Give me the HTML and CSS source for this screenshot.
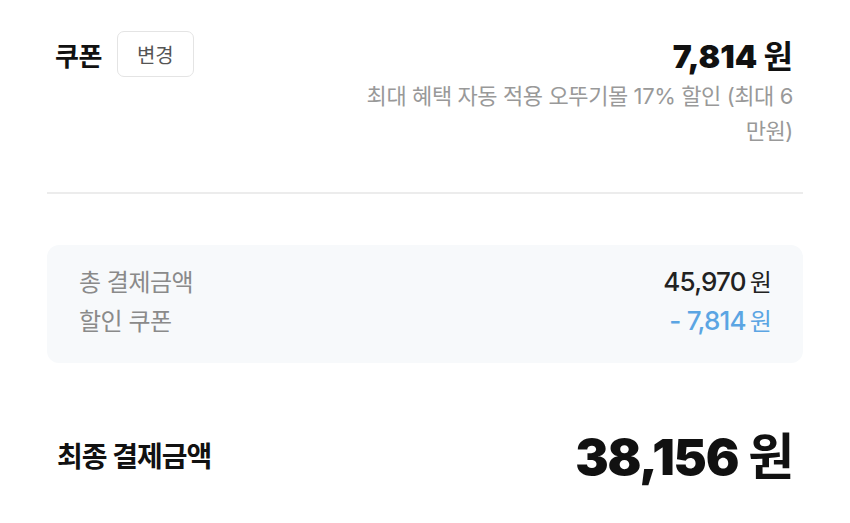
FILE: index.html
```html
<!DOCTYPE html>
<html lang="ko">
<head>
    <meta charset="UTF-8">
    <meta name="viewport" content="width=device-width, initial-scale=1.0">
    <title>결제 금액</title>
    <link rel="stylesheet" href="styles.css">
</head>
<body>

    <div class="page">
        <!-- 쿠폰 영역 -->
        <div class="coupon">
            <div class="coupon-head">
                <div class="coupon-title">
                    <h2>쿠폰</h2>
                    <button class="btn-change">변경</button>
                </div>
                <div class="coupon-amount">7,814 <span class="won">원</span></div>
            </div>
            <p class="coupon-desc">최대 혜택 자동 적용 오뚜기몰 17% 할인 (최대 6 만원)</p>
        </div>

        <div class="divider"></div>

        <!-- 결제 요약 -->
        <div class="summary">
            <div class="summary-row">
                <span class="label">총 결제금액</span>
                <span class="value">45,970<span class="won">원</span></span>
            </div>
            <div class="summary-row">
                <span class="label">할인 쿠폰</span>
                <span class="value discount">- 7,814<span class="won">원</span></span>
            </div>
        </div>

        <div class="total">
            <h3>최종 결제금액</h3>
            <div class="total-amount">38,156<span class="won">원</span></div>
        </div>
    </div>

</body>
</html>
```

FILE: styles.css
```css
body {
    margin: 0;
    background-color: #fff;
    color: #111;
    font-family: Inter, 'Noto Sans CJK KR', sans-serif;
}
.page {
    padding: 0 47px;
}
.coupon {
    padding: 31px 10px 0 8px;
}
.coupon-head {
    display: flex;
    justify-content: space-between;
    align-items: center;
}
.coupon-title {
    display: flex;
    align-items: center;
    gap: 15px;
}
.coupon-title h2 {
    margin: 0;
    font-size: 26px;
    font-weight: 700;
    letter-spacing: -0.5px;
}
.btn-change {
    width: 77px;
    height: 46px;
    border: 1px solid #e4e4e4;
    border-radius: 7px;
    background-color: #fff;
    color: #555;
    font-family: inherit;
    font-size: 20px;
    cursor: pointer;
}
.coupon-amount {
    font-size: 32px;
    font-weight: 900;
    letter-spacing: 0;
}
.coupon-amount .won {
    font-weight: 700;
}
.coupon-desc {
    margin: 2px 0 0 auto;
    width: 440px;
    text-align: right;
    color: #999;
    font-size: 22px;
    line-height: 35px;
    letter-spacing: -0.4px;
}
.divider {
    height: 2px;
    background-color: #ececec;
    margin-top: 43px;
}
.summary {
    margin-top: 51px;
    padding: 16px 32px 24px;
    background-color: #f7f9fb;
    border-radius: 12px;
}
.summary-row {
    display: flex;
    justify-content: space-between;
    align-items: center;
    height: 39px;
    font-size: 24px;
}
.label {
    color: #8a8a8a;
    letter-spacing: -0.5px;
}
.value {
    color: #222;
    font-size: 26px;
    font-weight: 500;
    letter-spacing: -0.8px;
}
.value .won {
    margin-left: 4px;
    font-size: 24px;
    font-weight: 400;
}
.discount {
    color: #5ba5e3;
}
.total {
    display: flex;
    justify-content: space-between;
    align-items: center;
    padding: 54px 10px 0 10px;
}
.total h3 {
    margin: 4px 0 0;
    font-size: 28px;
    font-weight: 700;
    letter-spacing: -1px;
}
.total-amount {
    font-size: 50px;
    font-weight: 900;
    letter-spacing: -1.2px;
}
.total-amount .won {
    margin-left: 10px;
    font-weight: 700;
}
```
